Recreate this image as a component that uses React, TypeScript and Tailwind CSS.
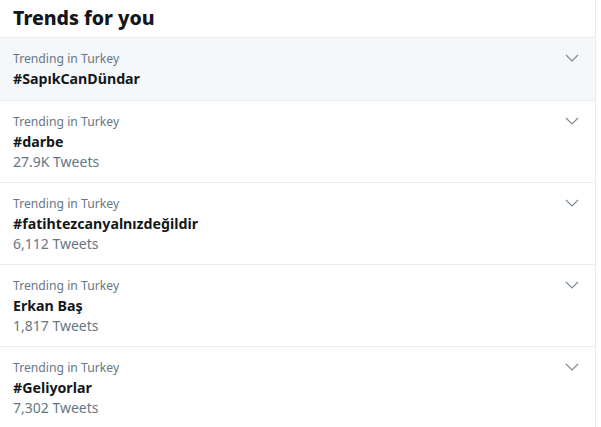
import React from "react";

const trends = [
  { name: "#SapıkCanDündar", count: null, hover: true },
  { name: "#darbe", count: "27.9K Tweets" },
  { name: "#fatihtezcanyalnızdeğildir", count: "6,112 Tweets" },
  { name: "Erkan Baş", count: "1,817 Tweets" },
  { name: "#Geliyorlar", count: "7,302 Tweets" },
];

function Chevron() {
  return (
    <svg width="14" height="8" viewBox="0 0 14 8" className="mt-[6px]">
      <path d="M1 1 L7 7 L13 1" fill="none" stroke="#7b8a96" strokeWidth="1.2" />
    </svg>
  );
}

export default function App() {
  return (
    <div className="w-[601px] h-[427px] bg-white overflow-hidden" style={{ fontFamily: '"Noto Sans", "Open Sans", sans-serif' }}>
      <div className="w-[596px] border-r border-[#e6ecf0] h-full">
        <div className="h-[38px] border-b border-[#e6ecf0] px-[13px] pb-[2px] flex items-center">
          <h2 className="text-[19.5px] font-extrabold text-[#14171a] leading-none">Trends for you</h2>
        </div>
        {trends.map((t, i) => (
          <div
            key={i}
            className={`flex justify-between border-b border-[#e6ecf0] pl-[13px] pr-[16px] ${t.hover ? "bg-[#f5f8fa] pt-[10px] pb-[11px]" : "bg-white pt-[10px] pb-[10px]"}`}
          >
            <div className="flex flex-col">
              <div className="text-[12.2px] leading-[21px] text-[#657786]">Trending in Turkey</div>
              <div className="text-[14.2px] leading-[20px] font-bold text-[#14171a]">{t.name}</div>
              {t.count && <div className="text-[14px] leading-[20px] text-[#657786]">{t.count}</div>}
            </div>
            <Chevron />
          </div>
        ))}
      </div>
    </div>
  );
}
